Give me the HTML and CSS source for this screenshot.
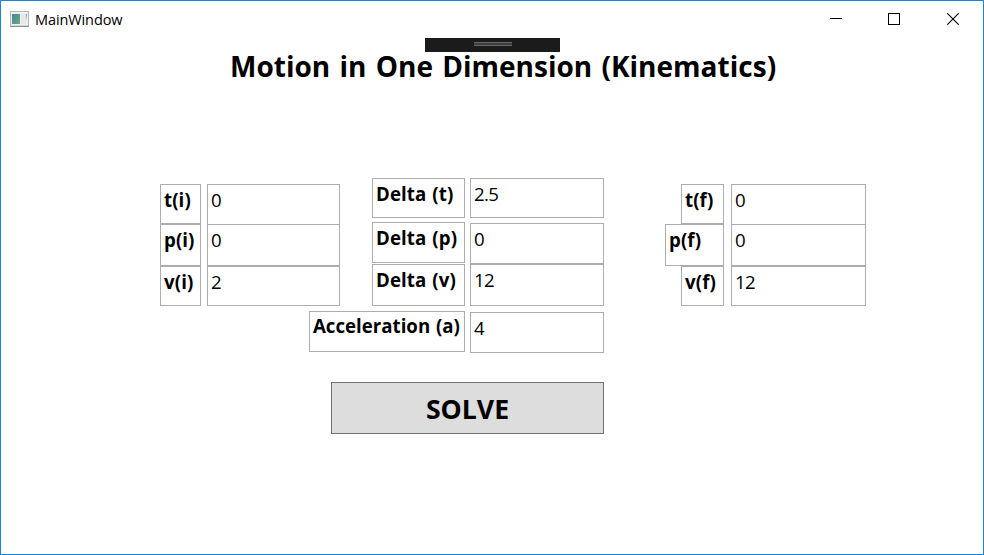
FILE: index.html
```html
<!DOCTYPE html>
<html lang="en">
<head>
<meta charset="utf-8">
<title>MainWindow</title>
<link rel="stylesheet" href="styles.css">
</head>
<body>
<div class="window">
  <header class="titlebar">
    <svg class="app-icon" width="19" height="16" viewBox="0 0 19 16">
      <defs>
        <linearGradient id="pane" x1="0" y1="0" x2="1" y2="1"><stop offset="0" stop-color="#4f7fa0"/><stop offset="1" stop-color="#62b079"/></linearGradient>
        <linearGradient id="strip" x1="0" y1="0" x2="0" y2="1"><stop offset="0" stop-color="#5fae8a"/><stop offset="1" stop-color="#e4e8ea"/></linearGradient>
      </defs>
      <rect x=".5" y=".5" width="18" height="14.5" fill="#f1f1f2" stroke="#b4b6b9"/>
      <path d="M0 15.5h19" stroke="#8f9194"/>
      <rect x="2" y="3" width="8" height="10" fill="url(#pane)"/>
      <rect x="11" y="3" width="5" height="10" fill="#e6e8ea"/>
      <rect x="16" y="3" width="1" height="7" fill="url(#strip)"/>
    </svg>
    <span class="caption">MainWindow</span>
    <div class="controls">
      <svg width="12" height="12" viewBox="0 0 12 12"><path d="M0 5.5h12" stroke="#000"/></svg>
      <svg width="12" height="12" viewBox="0 0 12 12"><rect x=".5" y=".5" width="11" height="11" fill="none" stroke="#000"/></svg>
      <svg class="close" width="12" height="12" viewBox="0 0 12 12"><path d="M.3.3l11.4 11.4M11.7.3L.3 11.7" stroke="#000" stroke-width="1.1"/></svg>
    </div>
  </header>
  <div class="debug-handle"><span class="grip"></span></div>
  <h1>Motion in One Dimension (Kinematics)</h1>
  <main class="fields">
    <section class="group initial">
      <div class="labels"><div class="box h40"><b>t(i)</b></div><div class="box h42"><b>p(i)</b></div><div class="box h40"><b>v(i)</b></div></div>
      <div class="values"><div class="box h40 open">0</div><div class="box h42">0</div><div class="box h40">2</div></div>
    </section>
    <section class="group delta">
      <div class="labels">
        <div class="box h40"><b>Delta (t)</b></div>
        <div class="box h41 gap4"><b>Delta (p)</b></div>
        <div class="box h42 gap1"><b>Delta (v)</b></div>
        <div class="box h41 gap5 accel"><b>Acceleration (a)</b></div>
      </div>
      <div class="values">
        <div class="box h40">2.5</div>
        <div class="box h41 gap5">0</div>
        <div class="box h42">12</div>
        <div class="box h41 gap6">4</div>
      </div>
    </section>
    <section class="group final">
      <div class="labels"><div class="box h40"><b>t(f)</b></div><div class="box h42 wide"><b>p(f)</b></div><div class="box h40"><b>v(f)</b></div></div>
      <div class="values"><div class="box h40 open">0</div><div class="box h42">0</div><div class="box h40">12</div></div>
    </section>
  </main>
  <button class="solve" type="button">SOLVE</button>
</div>
</body>
</html>
```
FILE: styles.css
```css
* { box-sizing: border-box; }
body { margin: 0; background: #fff; color: #000; font-family: "Open Sans", "Noto Sans", sans-serif; }
.window { position: relative; width: 984px; height: 555px; border: 1px solid #1883d7; overflow: hidden; display: flow-root; }
.titlebar { display: flex; height: 37px; padding-left: 9px; }
.app-icon { margin-top: 10px; }
.caption { margin-left: 6px; font-size: 14.5px; line-height: 37px; letter-spacing: -0.1px; }
.controls { display: flex; gap: 46px; margin: 12px 24px 0 auto; }
.close { margin-left: 1px; }
.debug-handle { position: absolute; left: 424px; top: 37px; width: 135px; height: 14px; background: #1b1b1c; }
.grip { position: absolute; left: 49px; top: 4px; width: 38px; height: 4px; background: #3c3c3e; border: solid #68686a; border-width: 1px 0; }
h1 { margin: 9px 0 0 229px; font-size: 28px; line-height: 38px; font-weight: 700; white-space: nowrap; letter-spacing: 0.02px; word-spacing: 1.9px; }
.fields { display: flex; align-items: flex-start; height: 176px; margin-top: 92px; padding-left: 159px; font-size: 18.67px; line-height: 28px; white-space: nowrap; }
.group { display: flex; }
.initial, .final { margin-top: 7px; }
.delta { margin: 1px 0 0 32px; }
.final { margin-left: 77px; }
.box { border: 1px solid #abadb3; padding: 1px 3px; background: #fff; letter-spacing: -0.6px; }
.box b { letter-spacing: 0.1px; word-spacing: 1px; }
.h40 { height: 40px; }
.h41 { height: 41px; }
.h42 { height: 42px; }
.gap1 { margin-top: 1px; }
.gap4 { margin-top: 4px; }
.gap5 { margin-top: 5px; }
.gap6 { margin-top: 6px; }
.open { border-bottom: 0; }
.labels { display: flex; flex-direction: column; }
.initial .labels { width: 41px; margin-right: 6px; }
.initial .values { width: 133px; }
.delta .labels { width: 93px; margin-right: 5px; }
.delta .values { width: 134px; }
.final .labels { width: 43px; margin-right: 7px; }
.final .values { width: 135px; }
.accel { width: 156px; margin-left: -63px; padding-top: 0; }
.accel b { letter-spacing: 0; }
.wide { width: 59px; margin-left: -16px; }
.solve { display: block; width: 273px; height: 52px; margin: 29px 0 0 330px; padding: 2px 0 0; border: 1px solid #707070; background: #ddd; color: #000; font: 700 26.67px/48px "Open Sans", "Noto Sans", sans-serif; }
```
